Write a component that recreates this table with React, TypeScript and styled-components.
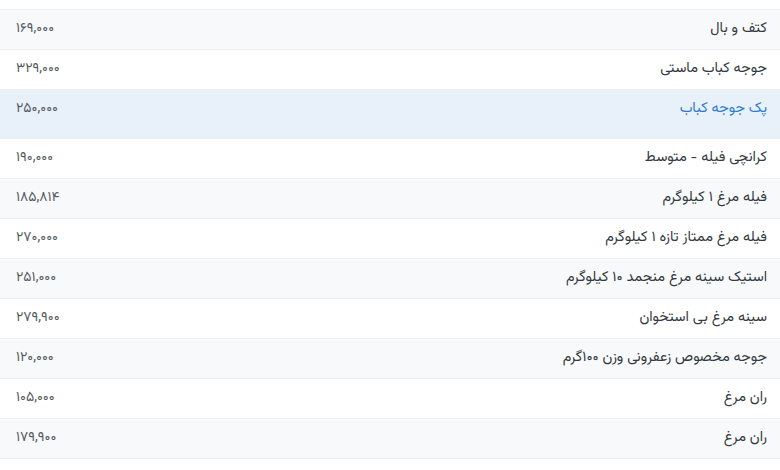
import React from "react";
import styled, { createGlobalStyle } from "styled-components";

const Global = createGlobalStyle`
  html, body { margin: 0; padding: 0; background: #ffffff; }
  body { font-family: "Vazirmatn", "Vazir", "Noto Sans Arabic", "DejaVu Sans", sans-serif; }
`;

const List = styled.div`
  direction: rtl;
  padding-top: 9px;
  border-bottom: 0;
`;

const Row = styled.div<{ $striped?: boolean; $active?: boolean }>`
  display: flex;
  align-items: flex-start;
  justify-content: space-between;
  box-sizing: border-box;
  height: ${(p) => (p.$active ? "49px" : "40px")};
  padding: 8px 13px 0 16px;
  border-top: 1px solid #eceef1;
  background: ${(p) => (p.$active ? "#e8f0fa" : p.$striped ? "#f8f9fb" : "#ffffff")};
`;

const Name = styled.span<{ $active?: boolean }>`
  font-size: 14.5px;
  line-height: 22px;
  color: ${(p) => (p.$active ? "#2f7bd3" : "#333a40")};
`;

const Price = styled.span`
  direction: ltr;
  font-size: 14px;
  line-height: 22px;
  color: #555b61;
`;

const items = [
  { name: "کتف و بال", price: "۱۶۹,۰۰۰" },
  { name: "جوجه کباب ماستی", price: "۳۲۹,۰۰۰" },
  { name: "پک جوجه کباب", price: "۲۵۰,۰۰۰", active: true },
  { name: "کرانچی فیله - متوسط", price: "۱۹۰,۰۰۰" },
  { name: "فیله مرغ ۱ کیلوگرم", price: "۱۸۵,۸۱۴" },
  { name: "فیله مرغ ممتاز تازه ۱ کیلوگرم", price: "۲۷۰,۰۰۰" },
  { name: "استیک سینه مرغ منجمد ۱۰ کیلوگرم", price: "۲۵۱,۰۰۰" },
  { name: "سینه مرغ بی استخوان", price: "۲۷۹,۹۰۰" },
  { name: "جوجه مخصوص زعفرونی وزن ۱۰۰گرم", price: "۱۲۰,۰۰۰" },
  { name: "ران مرغ", price: "۱۰۵,۰۰۰" },
  { name: "ران مرغ", price: "۱۷۹,۹۰۰" },
  { name: "بال مرغ ساده", price: "۱۴۵,۰۰۰" },
];

export default function App() {
  return (
    <>
      <Global />
      <List>
        {items.map((it, i) => (
          <Row key={i} $striped={i % 2 === 0} $active={it.active}>
            <Name $active={it.active}>{it.name}</Name>
            <Price>{it.price}</Price>
          </Row>
        ))}
      </List>
    </>
  );
}
